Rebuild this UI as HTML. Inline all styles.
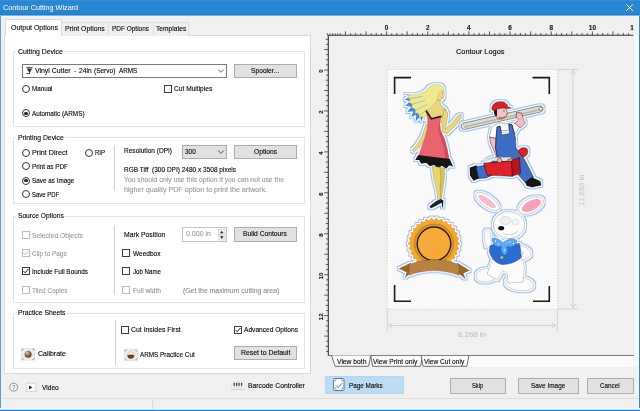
<!DOCTYPE html>
<html><head><meta charset="utf-8"><title>Contour Cutting Wizard</title>
<style>
html,body{margin:0;padding:0}
body{width:640px;height:411px;position:relative;overflow:hidden;background:#f0f0f0;font-family:"Liberation Sans",sans-serif}
div,span,svg{position:absolute;box-sizing:border-box}
.t{white-space:pre;line-height:10px;transform-origin:0 50%;-webkit-text-stroke:0.12px currentColor}
.gb{border:1px solid #e4e4e4}
.btn{background:#e1e1e1;border:1px solid #adadad}
.cb{width:8px;height:8px;border:1px solid #3c3c3c;background:#fff}
.cb.d{border-color:#bcbcbc}
.rd{width:8px;height:8px;border:1px solid #333;border-radius:50%;background:#fff}
.rd.on::after{content:"";position:absolute;left:1.3px;top:1.3px;width:3.4px;height:3.4px;border-radius:50%;background:#222}
.vs{width:1px;background:#d0d0d0}
.lm{background:#fff;height:10px}
</style></head><body>
<!-- title bar -->
<div style="left:0;top:0;width:640px;height:16px;background:linear-gradient(#3b91d9 0,#2b86d0 1.5px,#2b86d0 13px,#1f7ac4 15px,#8cc0e8 15.6px,#f0f0f0 16px)"></div>
<svg style="left:624.4px;top:2.4px" width="12" height="12" viewBox="0 0 12 12"><path d="M2.4 2.4 L8.8 8.8 M8.8 2.4 L2.4 8.8" stroke="#fff" stroke-width="1" fill="none"/></svg>
<!-- window borders -->
<div style="left:0;top:16px;width:2px;height:395px;background:linear-gradient(90deg,#5f95c4 0,#6a9cc6 0.9px,#e4f4fb 1.1px,#eef6f8 2px)"></div>
<div style="left:638px;top:16px;width:2px;height:395px;background:linear-gradient(90deg,#f8fcfe 0,#f8fcfe 0.8px,#2f82cc 1px,#2f82cc 2px)"></div>
<div style="left:0;top:408px;width:640px;height:3px;background:linear-gradient(#f6fafc 0,#f6fafc 1px,#c4def3 1px,#c4def3 2px,#3285cc 2px,#3285cc 3px)"></div>
<!-- status bar -->
<div style="left:1.5px;top:398px;width:637px;height:1px;background:#dedede"></div>
<div style="left:152px;top:399px;width:1px;height:10px;background:#dcdcdc"></div>

<!-- tab panel -->
<div style="left:4px;top:35px;width:307px;height:338.6px;background:#fff;border:1px solid #d9d9d9"></div>
<!-- tabs -->
<div style="left:61px;top:21.6px;width:128px;height:14px;background:#f0f0f0;border:1px solid #dfdfdf;border-bottom:none"></div>
<div style="left:108px;top:22px;width:1px;height:13px;background:#dfdfdf"></div>
<div style="left:153px;top:22px;width:1px;height:13px;background:#dfdfdf"></div>
<div style="left:5px;top:19px;width:57px;height:17px;background:#fff;border:1px solid #d9d9d9;border-bottom:none"></div>

<!-- group boxes -->
<div class="gb" style="left:13px;top:51px;width:291.5px;height:75.5px"></div>
<div class="lm" style="left:16px;top:46px;width:48px"></div>
<div class="gb" style="left:13px;top:137px;width:291.5px;height:66.5px"></div>
<div class="lm" style="left:16px;top:132px;width:49px"></div>
<div class="gb" style="left:13px;top:215.5px;width:291.5px;height:87.5px"></div>
<div class="lm" style="left:16px;top:210px;width:49px"></div>
<div class="gb" style="left:13px;top:312.5px;width:291.5px;height:56px"></div>
<div class="lm" style="left:16px;top:307px;width:51px"></div>

<!-- cutting device -->
<div style="left:22px;top:64px;width:204.5px;height:14px;background:#fff;border:1px solid #7a7a7a"></div>
<svg style="left:25px;top:66px" width="10" height="10" viewBox="25 66 10 10"><path d="M26.4 67.3 H32.5 V68.2 H26.4Z M26.9 68.7 H32 L30.1 72.3 H29.1Z" fill="#2a2a2a"/><path d="M29.6 72 V73.5 M26.3 73.5 H30" stroke="#2a2a2a" stroke-width="0.8" fill="none"/></svg>
<svg style="left:217px;top:68px" width="8" height="6" viewBox="0 0 8 6"><path d="M1.2 1.5 L4 4.3 L6.8 1.5" stroke="#555" stroke-width="0.9" fill="none"/></svg>
<div class="btn" style="left:234px;top:64px;width:62.5px;height:14px"></div>
<div class="rd" style="left:22px;top:85px"></div>
<div class="cb" style="left:164px;top:85px"></div>
<div class="rd on" style="left:22px;top:109.3px"></div>

<!-- printing device -->
<div class="rd" style="left:22px;top:148.5px"></div>
<div class="rd" style="left:85px;top:148.5px"></div>
<div class="rd" style="left:22px;top:162.3px"></div>
<div class="rd on" style="left:22px;top:176.5px"></div>
<div class="rd" style="left:22px;top:190px"></div>
<div class="vs" style="left:114px;top:145px;height:45.5px"></div>
<div style="left:182px;top:144.5px;width:44.5px;height:14px;background:#e1e1e1;border:1px solid #adadad"></div>
<svg style="left:217px;top:149px" width="8" height="6" viewBox="0 0 8 6"><path d="M1.2 1.5 L4 4.3 L6.8 1.5" stroke="#444" stroke-width="0.9" fill="none"/></svg>
<div class="btn" style="left:234px;top:144.5px;width:62.5px;height:14px"></div>

<!-- source options -->
<div class="cb d" style="left:22px;top:231px"></div>
<div class="cb d" style="left:22px;top:249px"></div>
<svg style="left:22px;top:249px" width="8" height="8" viewBox="0 0 8 8"><path d="M1.6 4.1 L3.2 5.8 L6.4 2" stroke="#b0b0b0" stroke-width="0.9" fill="none"/></svg>
<div class="cb" style="left:22px;top:267.3px"></div>
<svg style="left:22px;top:267.3px" width="8" height="8" viewBox="0 0 8 8"><path d="M1.6 4.1 L3.2 5.8 L6.4 2" stroke="#222" stroke-width="1" fill="none"/></svg>
<div class="cb d" style="left:22px;top:286px"></div>
<div class="vs" style="left:114px;top:225px;height:70px"></div>
<div style="left:182px;top:227px;width:44.5px;height:14.5px;background:#fff;border:1px solid #c2c2c2"></div>
<svg style="left:217.5px;top:228.5px" width="8" height="12" viewBox="0 0 8 12"><rect x="0.5" y="0.5" width="6.5" height="5" fill="#f0f0f0" stroke="#c8c8c8" stroke-width="0.6"/><rect x="0.5" y="6" width="6.5" height="5" fill="#f0f0f0" stroke="#c8c8c8" stroke-width="0.6"/><path d="M2 4.3 L3.75 1.7 L5.5 4.3Z M2 7.3 L3.75 9.9 L5.5 7.3Z" fill="#222"/></svg>
<div class="btn" style="left:234px;top:227px;width:62.5px;height:14.5px"></div>
<div class="cb" style="left:122px;top:249px"></div>
<div class="cb" style="left:122px;top:267.3px"></div>
<div class="cb d" style="left:122px;top:286px"></div>

<!-- practice sheets -->
<div class="vs" style="left:114.5px;top:320px;height:44.5px"></div>
<div class="cb" style="left:121px;top:326px"></div>
<div class="cb" style="left:234px;top:326px"></div>
<svg style="left:234px;top:326px" width="8" height="8" viewBox="0 0 8 8"><path d="M1.6 4.1 L3.2 5.8 L6.4 2" stroke="#222" stroke-width="1" fill="none"/></svg>
<div class="btn" style="left:234px;top:346px;width:63px;height:14px"></div>
<svg style="left:21px;top:348px" width="15" height="13" viewBox="0 0 15 13"><defs><radialGradient id="sp1" cx="0.38" cy="0.32" r="0.75"><stop offset="0" stop-color="#e6d8d2"/><stop offset="0.45" stop-color="#94685c"/><stop offset="1" stop-color="#5a2e26"/></radialGradient></defs><rect x="0.3" y="0.5" width="13.4" height="11.6" fill="#ededed" stroke="#d9d9d9" stroke-width="0.6"/><path d="M1 3 V1.2 H3 M11 1.2 H13 V3 M1 9.6 V11.4 H3 M11 11.4 H13 V9.6" stroke="#b4b4b4" stroke-width="0.8" fill="none"/><circle cx="7.1" cy="6.3" r="3.5" fill="url(#sp1)"/></svg>
<svg style="left:123.7px;top:349px" width="15" height="13" viewBox="0 0 15 13"><rect x="0.3" y="0.5" width="13" height="11" fill="#ededed" stroke="#d9d9d9" stroke-width="0.6"/><path d="M1 3 V1.2 H3 M10.6 1.2 H12.6 V3 M1 9 V10.8 H3 M10.6 10.8 H12.6 V9" stroke="#b4b4b4" stroke-width="0.8" fill="none"/><circle cx="6.8" cy="6" r="3.5" fill="#f6f2f0" stroke="#9a8a86" stroke-width="0.4"/><path d="M3.4 6.3 A3.4 3.4 0 0 0 10.2 6.3 C8 5.2 5.6 5.2 3.4 6.3Z" fill="#7c3a30"/></svg>

<!-- bottom-left -->
<svg style="left:8px;top:381px;filter:grayscale(1)" width="12" height="12" viewBox="8 381 12 12"><circle cx="13.7" cy="387.2" r="4" fill="#f6f6f6" stroke="#7c7c7c" stroke-width="0.8"/><text x="13.7" y="389.6" font-size="6.6" text-anchor="middle" fill="#6a6a6a" font-family="Liberation Sans, sans-serif">?</text></svg>
<svg style="left:25px;top:382px" width="12" height="11" viewBox="25 382 12 11"><rect x="26.2" y="383.2" width="9.6" height="8.2" fill="#fcfcfc" stroke="#cdcdcd" stroke-width="0.8"/><path d="M29 385.6 L32.4 387.4 L29 389.2Z" fill="#222"/></svg>
<svg style="left:231px;top:380.5px" width="14" height="9" viewBox="0 0 14 9"><rect x="0.3" y="0.3" width="13.4" height="8" fill="#f6f6f6" stroke="#e0e0e0" stroke-width="0.5"/><path d="M3.2 1.8v3 M5.6 1.8v3 M8 1.8v3 M10.6 1.8v3" stroke="#333" stroke-width="1.3"/><path d="M3.2 5.2v1.4 M5.6 5.2v1.4 M8 5.2v1.4 M10.6 5.2v1.4" stroke="#bbb" stroke-width="1.1"/><path d="M0.3 8.4h13.4" stroke="#c8c8c8" stroke-width="0.8"/></svg>

<!-- right: preview -->
<div style="left:333px;top:355px;width:300.5px;height:12.4px;background:#fafafa"></div>
<div style="left:328px;top:355px;width:305.5px;height:1.1px;background:#7e7e7e"></div>
<div style="left:633.5px;top:35px;width:4.5px;height:332.4px;background:#f7f7f7"></div>
<svg style="left:0;top:0" width="640" height="411" viewBox="0 0 640 411" font-family="Liberation Sans, sans-serif">
<g stroke="#333" fill="none">
<path d="M327.7 35.3 H633.4 M328.3 34.7 V355.4" stroke-width="1.1"/>
<path stroke-width="0.85" stroke="#3c3c3c" d="M330.00 35.3v-2.0M327.43 35.3v-2.0M335.15 35.3v-2.0M332.58 35.3v-2.0M340.30 35.3v-2.0M337.72 35.3v-2.0M345.44 35.3v-3.9M350.59 35.3v-2.1M355.73 35.3v-2.4M360.88 35.3v-2.1M366.02 35.3v-3.9M371.17 35.3v-2.1M376.31 35.3v-2.4M381.46 35.3v-2.1M386.60 35.3v-3.9M391.75 35.3v-2.1M396.89 35.3v-2.4M402.04 35.3v-2.1M407.18 35.3v-3.9M412.33 35.3v-2.1M417.47 35.3v-2.4M422.62 35.3v-2.1M427.76 35.3v-3.9M432.91 35.3v-2.1M438.05 35.3v-2.4M443.20 35.3v-2.1M448.34 35.3v-3.9M453.49 35.3v-2.1M458.63 35.3v-2.4M463.78 35.3v-2.1M468.92 35.3v-3.9M474.06 35.3v-2.1M479.21 35.3v-2.4M484.36 35.3v-2.1M489.50 35.3v-3.9M494.64 35.3v-2.1M499.79 35.3v-2.4M504.94 35.3v-2.1M510.08 35.3v-3.9M515.23 35.3v-2.1M520.37 35.3v-2.4M525.51 35.3v-2.1M530.66 35.3v-3.9M535.81 35.3v-2.1M540.95 35.3v-2.4M546.10 35.3v-2.1M551.24 35.3v-3.9M556.38 35.3v-2.1M561.53 35.3v-2.4M566.67 35.3v-2.1M571.82 35.3v-3.9M576.97 35.3v-2.1M582.11 35.3v-2.4M587.25 35.3v-2.1M592.40 35.3v-3.9M597.55 35.3v-2.1M602.69 35.3v-2.4M607.84 35.3v-2.1M612.98 35.3v-3.9M618.12 35.3v-2.1M623.27 35.3v-2.4M628.41 35.3v-2.1M328.3 39.30h-2.6M328.3 44.41h-2.2M328.3 49.53h-4.1M328.3 54.65h-2.2M328.3 59.77h-2.6M328.3 64.88h-2.2M328.3 70.00h-4.1M328.3 75.12h-2.2M328.3 80.23h-2.6M328.3 85.35h-2.2M328.3 90.47h-4.1M328.3 95.59h-2.2M328.3 100.70h-2.6M328.3 105.82h-2.2M328.3 110.94h-4.1M328.3 116.06h-2.2M328.3 121.17h-2.6M328.3 126.29h-2.2M328.3 131.41h-4.1M328.3 136.53h-2.2M328.3 141.64h-2.6M328.3 146.76h-2.2M328.3 151.88h-4.1M328.3 157.00h-2.2M328.3 162.12h-2.6M328.3 167.23h-2.2M328.3 172.35h-4.1M328.3 177.47h-2.2M328.3 182.58h-2.6M328.3 187.70h-2.2M328.3 192.82h-4.1M328.3 197.94h-2.2M328.3 203.06h-2.6M328.3 208.17h-2.2M328.3 213.29h-4.1M328.3 218.41h-2.2M328.3 223.52h-2.6M328.3 228.64h-2.2M328.3 233.76h-4.1M328.3 238.88h-2.2M328.3 244.00h-2.6M328.3 249.11h-2.2M328.3 254.23h-4.1M328.3 259.35h-2.2M328.3 264.46h-2.6M328.3 269.58h-2.2M328.3 274.70h-4.1M328.3 279.82h-2.2M328.3 284.94h-2.6M328.3 290.05h-2.2M328.3 295.17h-4.1M328.3 300.29h-2.2M328.3 305.40h-2.6M328.3 310.52h-2.2M328.3 315.64h-4.1M328.3 320.76h-2.2M328.3 325.88h-2.6M328.3 330.99h-2.2M328.3 336.11h-4.1M328.3 341.23h-2.2M328.3 346.34h-2.6M328.3 351.46h-2.2"/>
</g>
<g font-size="6.4" font-weight="700" fill="#1c1c1c" stroke="#1c1c1c" stroke-width="0.15" text-anchor="middle" style="filter:grayscale(1)">
<text x="386.6" y="29.6">0</text>
<text x="427.8" y="29.6">2</text>
<text x="468.9" y="29.6">4</text>
<text x="510.1" y="29.6">6</text>
<text x="551.2" y="29.6">8</text>
<text x="592.4" y="29.6">10</text>
<svg x="620" y="20" width="13.4" height="14" viewBox="620 20 13.4 14" style="position:static"><text x="630.3" y="29.6" text-anchor="start">12</text></svg>
<text transform="translate(323.4 71.2) rotate(-90)" x="0" y="0" font-size="6">0</text>
<text transform="translate(323.4 112.1) rotate(-90)" x="0" y="0" font-size="6">2</text>
<text transform="translate(323.4 153.1) rotate(-90)" x="0" y="0" font-size="6">4</text>
<text transform="translate(323.4 194.0) rotate(-90)" x="0" y="0" font-size="6">6</text>
<text transform="translate(323.4 235.0) rotate(-90)" x="0" y="0" font-size="6">8</text>
<text transform="translate(323.4 275.9) rotate(-90)" x="0" y="0" font-size="6">10</text>
<text transform="translate(323.4 316.8) rotate(-90)" x="0" y="0" font-size="6">12</text>
</g>
<rect x="387.3" y="69.5" width="170" height="239.5" fill="#fff" stroke="#cfcfcf" stroke-width="1.1" stroke-dasharray="1.2 1.6"/>
<rect x="389" y="71" width="166.5" height="236.5" fill="#fafafa"/>
<g stroke="#d3d3d3" stroke-width="1" fill="none">
<path d="M558 69.5H578 M558 309H578 M573 71V308 M570.8 74.5L573 70.5L575.2 74.5 M570.8 304L573 308L575.2 304"/>
<path d="M387.3 310V331 M557.3 310V331 M388.5 325.5H556 M392.5 323.3L388.5 325.5L392.5 327.7 M552 323.3L556 325.5L552 327.7"/>
</g>
<text transform="translate(584 190) rotate(-90)" font-size="7.8" fill="#c4c4c4" text-anchor="middle" textLength="31" lengthAdjust="spacingAndGlyphs">11.693 in</text>
<g stroke="#1a1a1a" stroke-width="1.6" fill="none">
<path d="M411 77.6H394.6V94 M532.5 77.6H549.3V94 M394.6 285V301.2H411 M549.3 286V301.2H533"/>
</g>

<defs>
<filter id="halo" x="-10%" y="-10%" width="120%" height="120%">
<feMorphology in="SourceAlpha" operator="dilate" radius="1.9" result="d2"/>
<feFlood flood-color="#9cc0ee"/><feComposite in2="d2" operator="in" result="blue"/>
<feMorphology in="SourceAlpha" operator="dilate" radius="1.35" result="d1"/>
<feFlood flood-color="#ffffff"/><feComposite in2="d1" operator="in" result="white"/>
<feMerge><feMergeNode in="blue"/><feMergeNode in="white"/><feMergeNode in="SourceGraphic"/></feMerge>
</filter>
</defs>
<!-- woman -->
<g filter="url(#halo)" stroke-linejoin="round">
 <path d="M404 94 L410 96.500 L404.500 99.500 L410 101.500 L405 105.500 L411 107 L407 112 L413 111.500 L411 117.500 L416 115 L415.500 121.500 L420 117 L421.500 122 L424 114 L424 102 L414 96Z" fill="#3f8be0"/>
 <path d="M426 124 L422 136 L416 146 L412 150 L414 152 L419 148 L425 139 L429 128Z" fill="#e8d67a" stroke="#8a7a38" stroke-width="0.4"/>
 <path d="M434 99 L440 100 L441 105 L446 109 L447.500 117 L441 118 L431 119 L426.500 111 L430 104Z" fill="#e8d67a" stroke="#8a7a38" stroke-width="0.4"/>
 <path d="M444 109 L448 113 L446.500 124 L445 129 L452 123 L457.500 116 L461 114 L461.500 117.500 L457 124 L447 134 L442.500 132 L441.500 122Z" fill="#e8d67a" stroke="#8a7a38" stroke-width="0.4"/>
 <ellipse cx="439.800" cy="93.800" rx="4.600" ry="6.600" fill="#ecdc84" stroke="#8a7a38" stroke-width="0.4"/>
 <path d="M441.500 93 l1.600 0.300 M441 97.500 l1.400 -0.200" stroke="#7a5a40" stroke-width="0.5" fill="none"/>
 <path d="M436 84.300 C441 83.800 444.800 87.500 443.800 91 C441.500 90 439.300 91 438.700 94 C438.200 98 437 101 434 104 C431 108 427 112 424.500 120 C423 116 421.500 115.500 419.500 118.500 C419.500 114 418 112 415 113.500 C416 110 415 108 411.500 108 C413 105 412 103 408.500 102.500 C410.500 100.500 410.500 98.500 407.500 97.500 C409.500 96.500 409 95 406 94.300 C414 95.500 421 94.500 426 90.500 C428 87 431 84.800 436 84.300Z" fill="#efe88e" stroke="#b0a448" stroke-width="0.4"/>
 <path d="M409.500 98.500 L423 96.500 M411.500 104.500 L425 100.500 M415 110.500 L427 104.500 M419 115.500 L429 108.500" stroke="#6aa4ea" stroke-width="0.7" fill="none" opacity="0.8"/>
 <path d="M426.500 111.500 L431.500 119 L441 117 L440 124 L440.500 130 L445 140 L447.500 150 L449.500 161 L418 157.500 L421 148 L425 138 L427.500 128 L427.500 120Z" fill="#e8656e" stroke="#9a3a44" stroke-width="0.4"/>
 <path d="M441 117 L440 124 L440.500 130 L445 140 L447.500 150 L449.500 161 L445.500 160.500 L444.500 150 L441.500 140 L438 130Z" fill="#d24e5c"/>
 <path d="M426 110.500 L431.500 118.800 L441.500 116.300" fill="none" stroke="#141414" stroke-width="1.5"/>
 <path d="M418 155 L450 159 L453.500 167 L449.500 165.500 L446 169 L442 166 L438 168.500 L434 165 L430 166.500 L426 163 L421 164 L419 160 L415 160Z" fill="#161616"/>
 <path d="M438 167 L444.500 168 L444.500 178 L443 188 L441.500 199 L439 199 L440 186Z" fill="#dcc45a" stroke="#8a7a38" stroke-width="0.4"/>
 <path d="M432 166 L440 167.500 L441 178 L440 187 L441 200 L438 201 L436 188 L433.500 178Z" fill="#e8d670" stroke="#8a7a38" stroke-width="0.4"/>
 <path d="M429 206.500 L436 201 L441 199 L443.500 200 L443.200 207.500 L442.200 207.500 L441.500 203 L436 206 L431 208.500Z" fill="#16223c"/>
</g>
<!-- plumber -->
<g filter="url(#halo)" stroke-linejoin="round">
 <path d="M469.500 167.500 L476.500 165 L480 171 L479 178.500 L473.500 181 L470 176Z" fill="#141414"/>
 <path d="M498 154 L507 161 L500 172 L486 178 L478.500 178.500 L476 167 L488 164.500 L494 160Z" fill="#3c6ec6" stroke="#14204a" stroke-width="0.8"/>
 <path d="M462.500 123.300 L539.500 105.800 C543.500 105.300 544.500 110.800 541.500 111.800 L464.500 129.600 C460.500 130 459.800 124.300 462.500 123.300Z" fill="#dddcd4" stroke="#444" stroke-width="0.7"/>
 <path d="M464 127 L541 109.500" stroke="#b4b4aa" stroke-width="1.400" fill="none"/>
 <circle cx="540.800" cy="108.700" r="1.600" fill="#fff" stroke="#333" stroke-width="0.5"/>
 <path d="M514 124 L520.500 128 L525.500 123 L523 118 L521.500 113 L516.500 112.500 L516 117 L518.500 120Z" fill="#f3bcc0" stroke="#4a2020" stroke-width="0.6"/>
 <path d="M491.500 127 L499 122.500 L506 124 L513 122 L519.500 127.500 L515 134 L511 130 L499 131 L497.500 138.500 L489.500 137Z" fill="#fdfdfd" stroke="#555" stroke-width="0.5"/>
 <path d="M489.500 137 L496 138.500 L497.500 147 L501 157 L497.500 159.500 L493.500 150 L490.500 143Z" fill="#f3bcc0" stroke="#4a2020" stroke-width="0.6"/>
 <path d="M497 127 L500 126 L502 135 L509.500 133.500 L508.800 124 L512 124.500 L515.500 138 L516 148 L519.500 152 L525.500 161 L529.500 169 L533.500 177 L525.500 183 L518.500 175 L511 167 L503 160 L497 156 L495.500 148 L496 138Z" fill="#3c6ec6" stroke="#14204a" stroke-width="0.8"/>
 <path d="M525 182 L532 177 L540.500 181 L541.500 185.500 L532 187.500 L526.500 186Z" fill="#141414"/>
 <ellipse cx="501" cy="112.500" rx="6.300" ry="6.600" fill="#f5c2c6" stroke="#4a2020" stroke-width="0.6"/>
 <path d="M503 111 l2 0 M499 117 c2 1 4 1 6 -0.500" stroke="#5a2a2a" stroke-width="0.6" fill="none"/>
 <path d="M493.500 110 L494.500 115.500 L497 116 L497 110Z" fill="#1a1a1a"/>
 <path d="M492 110 C490.500 103.500 498 100 504 102 C506 103 507.500 104.500 508 106.500 L511.500 108 L508 109 C503 107 497 108 494.500 111Z" fill="#da242c" stroke="#3a0a0a" stroke-width="0.6"/>
 <path d="M510.500 161 L519.500 157.500 L520.500 173.500 L512 176.500Z" fill="#b8141e" stroke="#3a0a0a" stroke-width="0.6"/>
 <path d="M486 160.500 L492 157.500 L511 157 L512 161.500" fill="#e4e4e4" stroke="#666" stroke-width="0.4"/>
 <path d="M483.500 163 L511.500 161 L512.300 176.500 L487 175Z" fill="#dc222c" stroke="#3a0a0a" stroke-width="0.7"/>
 <path d="M507 160.500 L519 154.500" stroke="#8a6a3a" stroke-width="1.200"/>
 <path d="M518.500 152 C518 148 524 146 527.500 149 C529 152.500 527 156.500 523 157.500Z" fill="#dc222c" stroke="#3a0a0a" stroke-width="0.6"/>
 <circle cx="499.500" cy="160.500" r="2.200" fill="#f3bcc0" stroke="#4a2020" stroke-width="0.6"/>
</g>
<!-- rabbit -->
<g filter="url(#halo)" stroke-linejoin="round">
 <ellipse cx="487.500" cy="201.500" rx="14" ry="5.600" transform="rotate(36 487.500 201.500)" fill="#fdfdfd" stroke="#9a9a9a" stroke-width="0.5"/>
 <ellipse cx="487" cy="201.500" rx="10.500" ry="3.200" transform="rotate(36 487 201.500)" fill="#f6bccb"/>
 <ellipse cx="531" cy="205.500" rx="13.500" ry="7.200" transform="rotate(-27 531 205.500)" fill="#fdfdfd" stroke="#9a9a9a" stroke-width="0.5"/>
 <ellipse cx="531.500" cy="205.500" rx="10.500" ry="5" transform="rotate(-27 531.500 205.500)" fill="#f3a3b8"/>
 <ellipse cx="486.500" cy="275.300" rx="10.700" ry="6.800" transform="rotate(-8 486.500 275.300)" fill="#fcfcfc" stroke="#a0a0a0" stroke-width="0.5"/>
 <ellipse cx="519.500" cy="283.800" rx="14.500" ry="7" transform="rotate(8 519.500 283.800)" fill="#fcfcfc" stroke="#a0a0a0" stroke-width="0.5"/>
 <path d="M493 258 L522 256 L524.500 268 L523 282 L508 283 L507 273 L503 271 L497 280 L487 274Z" fill="#fcfcfc" stroke="#a0a0a0" stroke-width="0.5"/>
 <path d="M486 230 C483.500 233 484 240 486 247 L491.500 247 L491 236 C491 232 488.500 229 486 230Z" fill="#fcfcfc" stroke="#a0a0a0" stroke-width="0.5"/>
 <path d="M520 245 C527 247 532 251 531 255 C529 258 525 260 521.500 260 L520 256 L524 253 L519 250Z" fill="#fcfcfc" stroke="#a0a0a0" stroke-width="0.5"/>
 <path d="M490 246 L497 242 L512 245 L519.500 243 L521.500 257 C517 262 509 264.500 502 264.500 C494.500 263 490.500 257 489 251Z" fill="#2c6cd2" stroke="#1a3a8a" stroke-width="0.5"/>
 <ellipse cx="509" cy="225" rx="15.800" ry="13.600" fill="#fcfcfc" stroke="#a0a0a0" stroke-width="0.6"/>
 <ellipse cx="505.500" cy="220.500" rx="5.500" ry="4" fill="#eef0f2" stroke="#b0b0b0" stroke-width="0.4"/>
 <ellipse cx="515.500" cy="222" rx="3.500" ry="3" fill="#f2f3f5" stroke="#c0c0c0" stroke-width="0.3"/>
 <ellipse cx="501.200" cy="228.200" rx="3" ry="2.100" fill="#111"/>
 <path d="M503 233 C508 236 514 235 518 231" fill="none" stroke="#999" stroke-width="0.5"/>
 <path d="M492 238.500 C495 236.500 500 239.500 503 242.500 C507 238.500 514 237.500 517 240.500 C517.500 245 512 248 506.500 246.500 C508.500 250 507.500 254 504.500 255 C501 253 500.500 249 501.500 246.500 C496.500 248 491.500 244 492 238.500Z" fill="#5aa8ee" stroke="#2a60b0" stroke-width="0.4"/>
 <g fill="#fff"><circle cx="495.500" cy="241" r="0.700"/><circle cx="498.500" cy="244" r="0.700"/><circle cx="510" cy="242" r="0.700"/><circle cx="513.500" cy="243.500" r="0.700"/><circle cx="504.500" cy="250" r="0.700"/><circle cx="507" cy="243" r="0.600"/></g>
 <circle cx="501.800" cy="257.500" r="1.300" fill="#f2c830"/>
</g>
<!-- badge -->
<g filter="url(#halo)" stroke-linejoin="round">
 <polygon points="460.3,243.5 457.7,246.0 459.7,249.0 456.6,250.9 458.0,254.2 454.6,255.4 455.3,259.0 451.7,259.4 451.6,263.0 448.0,262.8 447.1,266.3 443.7,265.2 442.1,268.5 438.9,266.8 436.7,269.7 434.0,267.3 431.3,269.7 429.1,266.8 425.9,268.5 424.3,265.2 420.9,266.3 420.0,262.8 416.4,263.0 416.3,259.4 412.7,259.0 413.4,255.4 410.0,254.2 411.4,250.9 408.3,249.0 410.3,246.0 407.7,243.5 410.3,241.0 408.3,238.0 411.4,236.1 410.0,232.8 413.4,231.6 412.7,228.0 416.3,227.6 416.4,224.0 420.0,224.2 420.8,220.7 424.3,221.8 425.9,218.5 429.1,220.2 431.3,217.3 434.0,219.7 436.7,217.3 438.9,220.2 442.1,218.5 443.7,221.8 447.1,220.7 448.0,224.2 451.6,224.0 451.7,227.6 455.3,228.0 454.6,231.6 458.0,232.8 456.6,236.1 459.7,238.0 457.7,241.0" fill="#f0a832"/>
 <circle cx="434" cy="243.800" r="19.300" fill="none" stroke="#c98a2c" stroke-width="1.800"/>
 <circle cx="434" cy="243.800" r="16.800" fill="#f5aa3a" stroke="#2c1e0c" stroke-width="1.500"/>
 <path d="M398.500 268.500 L411 262.500 L411 272.500 L404.500 278.500 L406.500 272.500Z" fill="#96682c"/>
 <path d="M470 270.500 L457 262.500 L457 272.500 L466 279.500 L463.500 273.500Z" fill="#96682c"/>
 <path d="M409 264.500 C425 258.300 443 258.300 459 264.500 L459 275.500 C443 269.300 425 269.300 409 275.500Z" fill="#b98242" stroke="#7a5424" stroke-width="0.4"/>
</g>

<g fill="#fff" stroke="#4a4a4a" stroke-width="0.8">
<path d="M370.8 356 L372.6 366.3 H420.6 L422.6 356"/>
<path d="M421.2 356 L423 366.3 H466.8 L468.8 356"/>
<path d="M331.6 355.4 L335 366.3 H368.6 L370.8 355.4" fill="#fbfbfb"/>
</g>
</svg>
<!-- page marks button -->
<div style="left:325px;top:375.8px;width:78.8px;height:18.2px;background:#bcdbf4;border:1px solid #b4d6f2"></div>
<svg style="left:332px;top:376.5px" width="14" height="15" viewBox="332 376.5 14 15"><rect x="333.6" y="378" width="10.4" height="12" rx="1.2" fill="#fdfeff" stroke="#52667e" stroke-width="0.9"/><path d="M335.2 381 V379.6 H336.6 M341 379.6 H342.4 V381 M335.2 387 V388.4 H336.6 M341 388.4 H342.4 V387" stroke="#555" stroke-width="0.6" fill="none"/><path d="M336.4 385.2 L338.2 387.2 L341.8 382.8" stroke="#3578d0" stroke-width="1" fill="none"/></svg>
<div class="btn" style="left:450px;top:377.5px;width:56px;height:16px"></div>
<div class="btn" style="left:517.5px;top:377.5px;width:61px;height:16px"></div>
<div class="btn" style="left:586.5px;top:377.5px;width:47px;height:16px"></div>

<span class=t style="left:3.10px;top:2.69px;font-size:7.0px;color:#fff;transform:scaleX(1.0321);-webkit-text-stroke:0">Contour Cutting Wizard</span>
<span class=t style="left:10.75px;top:23.01px;font-size:7.8px;color:#000;transform:scaleX(0.8960);">Output Options</span>
<span class=t style="left:64.50px;top:23.86px;font-size:7.8px;color:#000;transform:scaleX(0.8818);">Print Options</span>
<span class=t style="left:111.75px;top:23.86px;font-size:7.8px;color:#000;transform:scaleX(0.8288);">PDF Options</span>
<span class=t style="left:155.50px;top:23.86px;font-size:7.8px;color:#000;transform:scaleX(0.8510);">Templates</span>
<span class=t style="left:17.75px;top:46.71px;font-size:7.8px;color:#000;transform:scaleX(0.8826);">Cutting Device</span>
<span class=t style="left:35.20px;top:66.36px;font-size:7.8px;color:#000;transform:scaleX(0.8862);">Vinyl Cutter</span>
<span class=t style="left:73.90px;top:66.36px;font-size:7.8px;color:#000;transform:scaleX(0.8814);">-</span>
<span class=t style="left:78.90px;top:66.36px;font-size:7.8px;color:#000;transform:scaleX(0.8542);">24in</span>
<span class=t style="left:94.20px;top:66.36px;font-size:7.8px;color:#000;transform:scaleX(0.8333);">(Servo)</span>
<span class=t style="left:118.60px;top:66.36px;font-size:7.8px;color:#000;transform:scaleX(0.8122);">ARMS</span>
<span class=t style="left:251.25px;top:66.36px;font-size:7.8px;color:#000;transform:scaleX(0.8573);">Spooler...</span>
<span class=t style="left:32.00px;top:84.36px;font-size:7.8px;color:#000;transform:scaleX(0.8015);">Manual</span>
<span class=t style="left:174.25px;top:84.36px;font-size:7.8px;color:#000;transform:scaleX(0.8485);">Cut Multiples</span>
<span class=t style="left:32.00px;top:108.86px;font-size:7.8px;color:#000;transform:scaleX(0.8132);">Automatic (ARMS)</span>
<span class=t style="left:17.50px;top:132.61px;font-size:7.8px;color:#000;transform:scaleX(0.8725);">Printing Device</span>
<span class=t style="left:32.00px;top:148.11px;font-size:7.8px;color:#000;transform:scaleX(0.9206);">Print Direct</span>
<span class=t style="left:94.50px;top:148.11px;font-size:7.8px;color:#000;transform:scaleX(0.7692);">RIP</span>
<span class=t style="left:32.00px;top:161.86px;font-size:7.8px;color:#000;transform:scaleX(0.8144);">Print as PDF</span>
<span class=t style="left:32.00px;top:176.11px;font-size:7.8px;color:#000;transform:scaleX(0.8123);">Save as Image</span>
<span class=t style="left:32.00px;top:189.61px;font-size:7.8px;color:#000;transform:scaleX(0.7666);">Save PDF</span>
<span class=t style="left:123.75px;top:146.11px;font-size:7.8px;color:#000;transform:scaleX(0.8391);">Resolution (DPI)</span>
<span class=t style="left:185.00px;top:146.86px;font-size:7.8px;color:#000;transform:scaleX(0.8259);">300</span>
<span class=t style="left:253.75px;top:146.86px;font-size:7.8px;color:#000;transform:scaleX(0.8651);">Options</span>
<span class=t style="left:123.75px;top:164.86px;font-size:7.8px;color:#000;transform:scaleX(0.8346);">RGB Tiff  (300 DPI) 2480 x 3508 pixels</span>
<span class=t style="left:123.75px;top:175.11px;font-size:7.8px;color:#999999;transform:scaleX(0.8719);">You should only use this option if you can not use the</span>
<span class=t style="left:123.75px;top:185.11px;font-size:7.8px;color:#999999;transform:scaleX(0.9156);">higher quality PDF option to print the artwork.</span>
<span class=t style="left:17.50px;top:210.86px;font-size:7.8px;color:#000;transform:scaleX(0.8512);">Source Options</span>
<span class=t style="left:32.00px;top:230.61px;font-size:7.8px;color:#999999;transform:scaleX(0.8651);">Selected Objects</span>
<span class=t style="left:32.00px;top:248.61px;font-size:7.8px;color:#999999;transform:scaleX(0.8238);">Clip to Page</span>
<span class=t style="left:32.00px;top:266.86px;font-size:7.8px;color:#000;transform:scaleX(0.8177);">Include Full Bounds</span>
<span class=t style="left:32.00px;top:285.61px;font-size:7.8px;color:#999999;transform:scaleX(0.8247);">Tiled Copies</span>
<span class=t style="left:123.75px;top:229.86px;font-size:7.8px;color:#000;transform:scaleX(0.8733);">Mark Position</span>
<span class=t style="left:185.75px;top:229.11px;font-size:7.8px;color:#9a9a9a;transform:scaleX(0.9009);">0.000 in</span>
<span class=t style="left:243.25px;top:229.11px;font-size:7.8px;color:#000;transform:scaleX(0.8555);">Build Contours</span>
<span class=t style="left:132.50px;top:248.61px;font-size:7.8px;color:#000;transform:scaleX(0.8381);">Weedbox</span>
<span class=t style="left:132.50px;top:266.86px;font-size:7.8px;color:#000;transform:scaleX(0.7877);">Job Name</span>
<span class=t style="left:132.50px;top:285.61px;font-size:7.8px;color:#999999;transform:scaleX(0.8501);">Full width</span>
<span class=t style="left:182.50px;top:285.61px;font-size:7.8px;color:#8c8c8c;transform:scaleX(0.8779);">(Get the maximum cutting area)</span>
<span class=t style="left:17.50px;top:307.81px;font-size:7.8px;color:#000;transform:scaleX(0.8698);">Practice Sheets</span>
<span class=t style="left:130.50px;top:325.31px;font-size:7.8px;color:#000;transform:scaleX(0.8832);">Cut Insides First</span>
<span class=t style="left:243.80px;top:325.31px;font-size:7.8px;color:#000;transform:scaleX(0.8475);">Advanced Options</span>
<span class=t style="left:37.60px;top:349.11px;font-size:7.8px;color:#000;transform:scaleX(0.8909);">Calibrate</span>
<span class=t style="left:140.30px;top:349.61px;font-size:7.8px;color:#000;transform:scaleX(0.8143);">ARMS Practice Cut</span>
<span class=t style="left:241.00px;top:348.31px;font-size:7.8px;color:#000;transform:scaleX(0.8816);">Reset to Default</span>
<span class=t style="left:42.00px;top:382.91px;font-size:7.8px;color:#000;transform:scaleX(0.8479);">Video</span>
<span class=t style="left:247.80px;top:380.61px;font-size:7.8px;color:#000;transform:scaleX(0.8736);">Barcode Controller</span>
<span class=t style="left:456.00px;top:47.11px;font-size:7.8px;color:#000;transform:scaleX(0.9481);">Contour Logos</span>
<span class=t style="left:457.50px;top:330.01px;font-size:7.8px;color:#c3c3c3;transform:scaleX(1.0126);">8.268 in</span>
<span class=t style="left:336.80px;top:357.31px;font-size:7.8px;color:#000;transform:scaleX(0.8649);">View both</span>
<span class=t style="left:372.50px;top:357.31px;font-size:7.8px;color:#000;transform:scaleX(0.8612);">View Print only</span>
<span class=t style="left:423.80px;top:357.31px;font-size:7.8px;color:#000;transform:scaleX(0.8458);">View Cut only</span>
<span class=t style="left:348.60px;top:380.51px;font-size:7.8px;color:#000;transform:scaleX(0.8075);">Page Marks</span>
<span class=t style="left:471.80px;top:380.61px;font-size:7.8px;color:#000;transform:scaleX(0.7382);">Skip</span>
<span class=t style="left:530.70px;top:380.81px;font-size:7.8px;color:#000;transform:scaleX(0.8243);">Save Image</span>
<span class=t style="left:600.40px;top:380.81px;font-size:7.8px;color:#000;transform:scaleX(0.8072);">Cancel</span>
</body></html>
